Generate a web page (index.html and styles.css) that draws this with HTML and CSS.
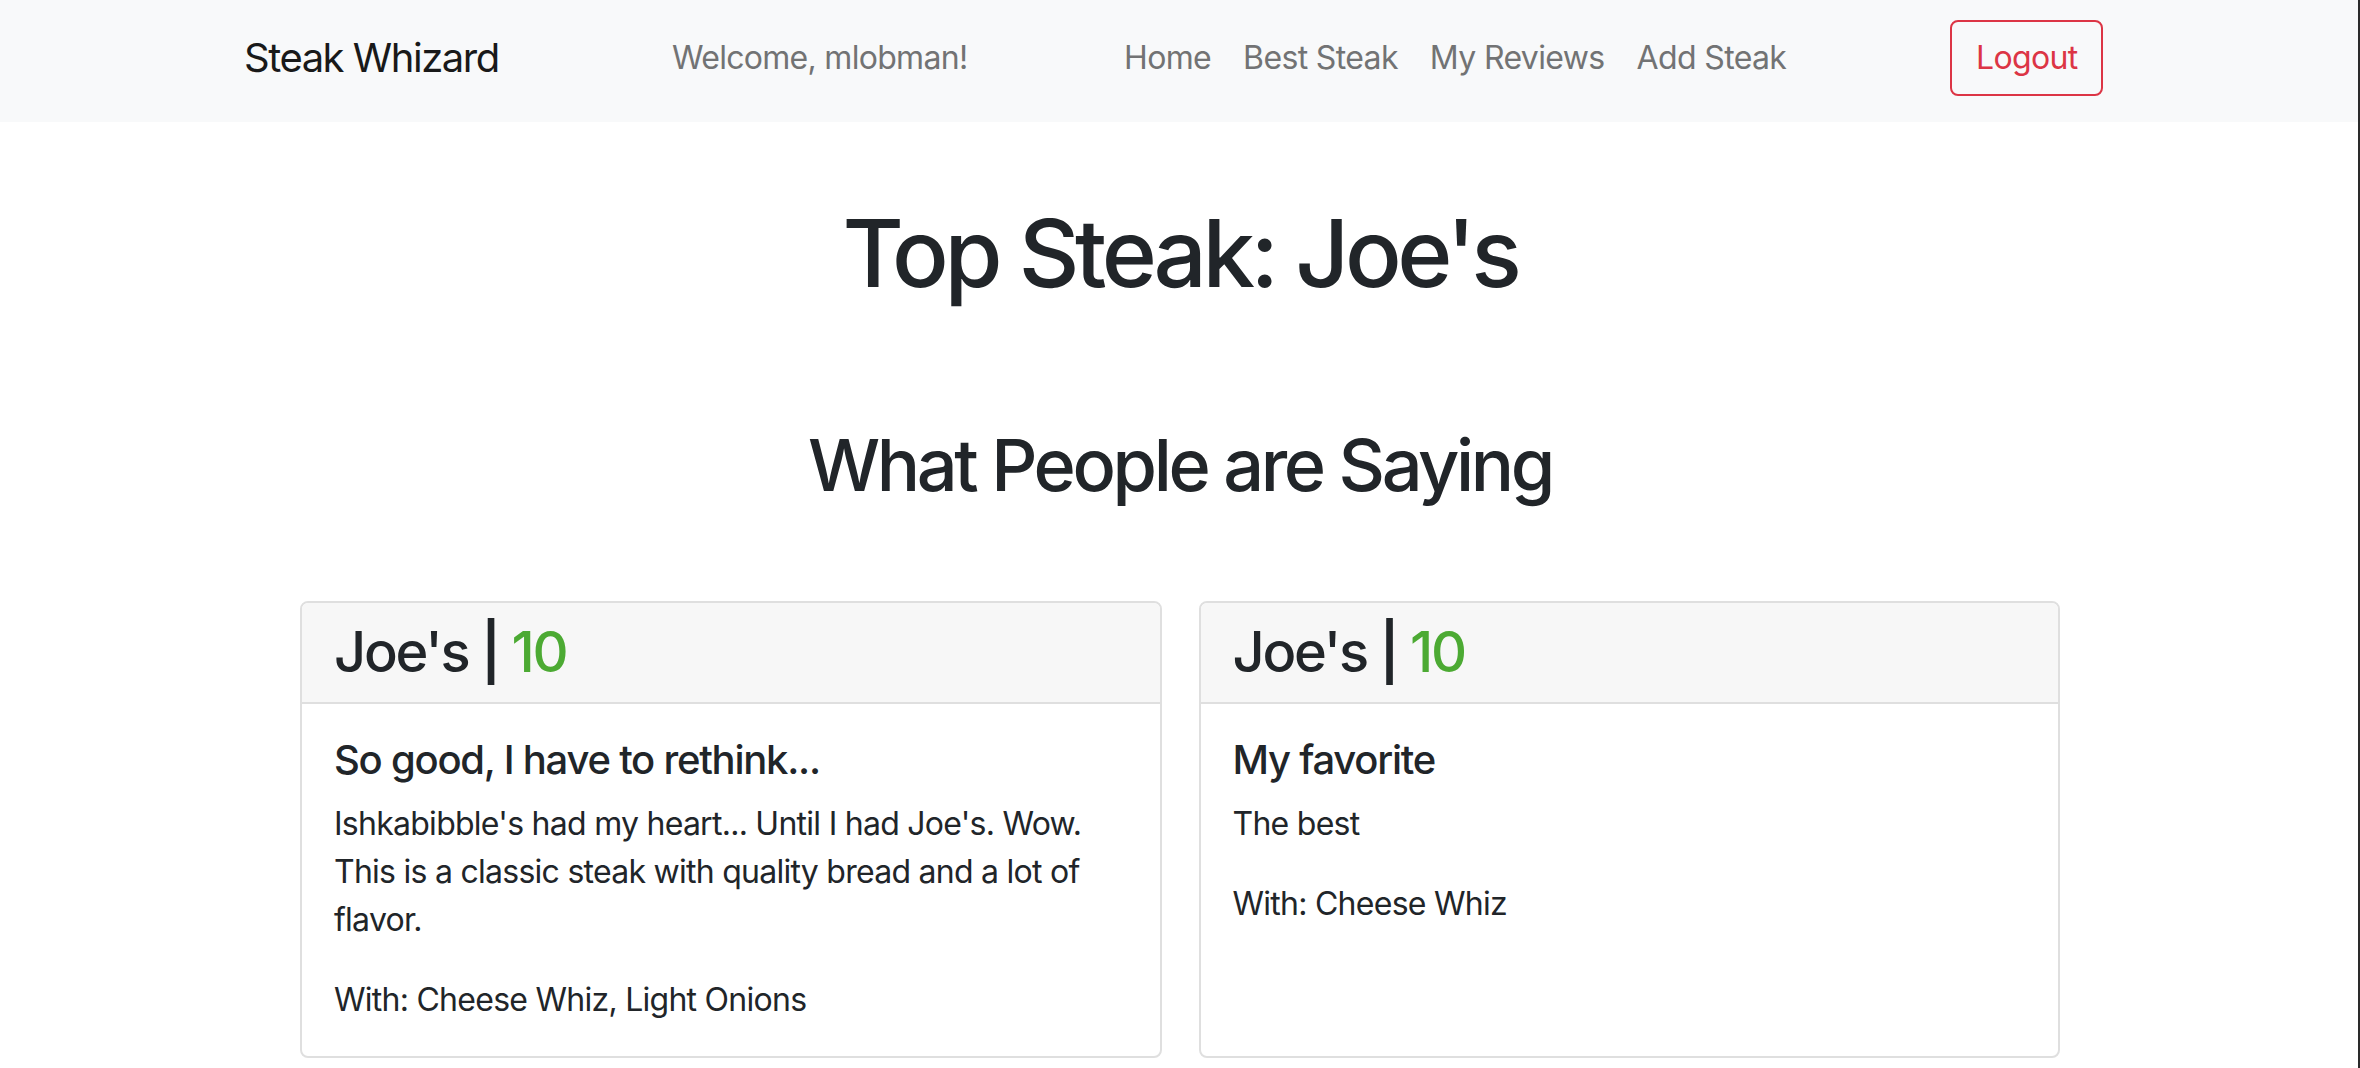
FILE: index.html
```html
<!DOCTYPE html>
<html lang="en">
<head>
<meta charset="utf-8">
<title>Steak Whizard</title>
<link rel="stylesheet" href="styles.css">
</head>
<body>
<nav class="navbar">
  <div class="nav-inner">
    <a class="brand" href="#">Steak Whizard</a>
    <span class="welcome">Welcome, mlobman!</span>
    <ul class="links">
      <li><a href="#">Home</a></li>
      <li><a href="#">Best Steak</a></li>
      <li><a href="#">My Reviews</a></li>
      <li><a href="#">Add Steak</a></li>
    </ul>
    <button class="logout" type="button">Logout</button>
  </div>
</nav>
<main class="content">
  <h1 class="title">Top Steak: Joe's</h1>
  <h2 class="subtitle">What People are Saying</h2>
  <div class="cards">
    <div class="card">
      <div class="card-header"><h3>Joe's <span class="bar">|</span> <span class="score">10</span></h3></div>
      <div class="card-body">
        <h5 class="card-title">So good, I have to rethink...</h5>
        <p class="card-text">Ishkabibble's had my heart... Until I had Joe's. Wow. This is a classic steak with quality bread and a lot of flavor.</p>
        <p class="card-text">With: Cheese Whiz, Light Onions</p>
      </div>
    </div>
    <div class="card">
      <div class="card-header"><h3>Joe's <span class="bar">|</span> <span class="score">10</span></h3></div>
      <div class="card-body">
        <h5 class="card-title">My favorite</h5>
        <p class="card-text">The best</p>
        <p class="card-text">With: Cheese Whiz</p>
      </div>
    </div>
  </div>
</main>
<div class="edge"></div>
</body>
</html>
```
FILE: styles.css
```css
* { box-sizing: border-box; }
html, body { margin: 0; padding: 0; }
body {
  font-family: Inter, "Liberation Sans", sans-serif;
  font-size: 32px;
  line-height: 48px;
  letter-spacing: -0.023em;
  color: #212529;
  background: #fff;
}
a { text-decoration: none; }

.navbar {
  background: #f8f9fa;
  height: 122px;
  padding-top: 18px;
}
.nav-inner {
  width: 1872px;
  margin: 0 auto;
  height: 76px;
  display: grid;
  grid-template-columns: 428px 436px 842px auto;
  align-items: center;
}
.brand {
  color: #191919;
  font-size: 40px;
  line-height: 60px;
  letter-spacing: -0.037em;
}
.welcome {
  color: #727374;
  letter-spacing: -0.022em;
}
.links {
  list-style: none;
  margin: 0;
  padding: 0;
  display: flex;
}
.links a {
  display: block;
  padding: 16px;
  color: #727374;
  letter-spacing: -0.02em;
}
.logout {
  justify-self: start;
  font-family: inherit;
  font-size: 32px;
  line-height: 48px;
  letter-spacing: -0.02em;
  color: #dc3545;
  background: transparent;
  border: 2px solid #dc3545;
  border-radius: 8px;
  padding: 12px 24px;
  height: 76px;
  width: 153px;
}

.content {
  padding-top: 74px;
}
.title {
  margin: 0;
  text-align: center;
  font-size: 94px;
  line-height: 114px;
  font-weight: 500;
  letter-spacing: -0.047em;
}
.subtitle {
  margin: 107px 0 0;
  text-align: center;
  font-size: 72px;
  line-height: 95px;
  font-weight: 500;
  letter-spacing: -0.047em;
}
.cards {
  width: 1760px;
  margin: 89px auto 0;
  display: grid;
  grid-template-columns: 1fr 1fr;
  gap: 37px;
}
.card {
  border: 2px solid #dfdfdf;
  border-radius: 8px;
  overflow: hidden;
  background: #fff;
}
.card-header {
  background: #f7f7f7;
  border-bottom: 2px solid #dfdfdf;
  padding: 16px 32px;
}
.card-header h3 {
  margin: 0;
  font-size: 56px;
  line-height: 67px;
  font-weight: 500;
  letter-spacing: -0.04em;
}
.bar { font-weight: 600; }
.score { color: #4caa33; }
.card-body {
  padding: 32px;
}
.card-title {
  margin: 0 0 16px;
  font-size: 40px;
  line-height: 48px;
  font-weight: 500;
  letter-spacing: -0.031em;
}
.card-text {
  margin: 0 0 32px;
}
.card-text:last-child { margin-bottom: 0; }

.edge {
  position: fixed;
  top: 0;
  right: 0;
  width: 2px;
  height: 100%;
  background: #2a2a2a;
}
```
